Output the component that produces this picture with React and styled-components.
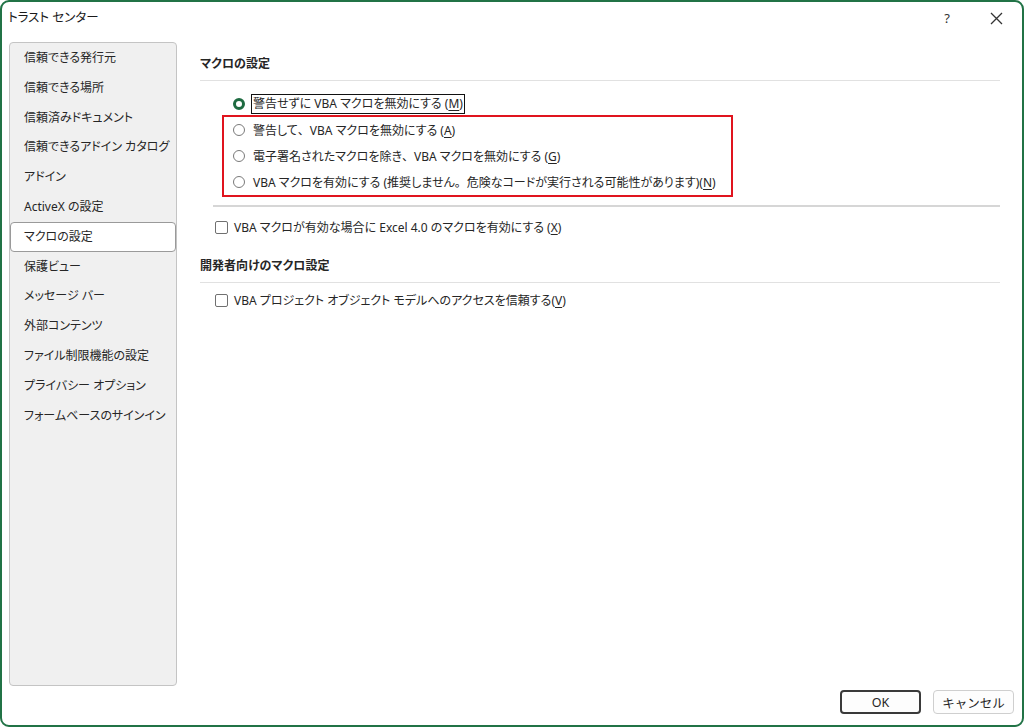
import styled, { createGlobalStyle } from "styled-components";

const GlobalStyle = createGlobalStyle`
  html, body {
    margin: 0;
    padding: 0;
    background: #ffffff;
  }
  body {
    font-family: "Noto Sans", "Noto Sans CJK JP", sans-serif;
    font-size: 13px;
    color: #262626;
    font-feature-settings: "palt";
  }
`;

const sideItems = [
  "信頼できる発行元",
  "信頼できる場所",
  "信頼済みドキュメント",
  "信頼できるアドイン カタログ",
  "アドイン",
  "ActiveX の設定",
  "マクロの設定",
  "保護ビュー",
  "メッセージ バー",
  "外部コンテンツ",
  "ファイル制限機能の設定",
  "プライバシー オプション",
  "フォームベースのサインイン",
];

const App = () => {
  return (
    <>
      <GlobalStyle />
      <Window>
        <TitleBar>
          <Title>トラスト センター</Title>
          <TitleButtons>
            <HelpButton>?</HelpButton>
            <CloseButton>
              <svg width="13" height="13" viewBox="0 0 13 13">
                <path d="M1 1 L12 12 M12 1 L1 12" stroke="#333" strokeWidth="1.3" fill="none" />
              </svg>
            </CloseButton>
          </TitleButtons>
        </TitleBar>

        <Body>
          <Sidebar>
            {sideItems.map((item) => (
              <SideItem key={item} $active={item === "マクロの設定"}>
                {item}
              </SideItem>
            ))}
          </Sidebar>

          <Content>
            <SectionHeading>マクロの設定</SectionHeading>
            <Rule />
            <RadioGroup>
              <RadioRow>
                <Radio $checked />
                <FocusLabel>
                  警告せずに VBA マクロを無効にする (<u>M</u>)
                </FocusLabel>
              </RadioRow>
              <Highlight>
                <RadioRow $tall>
                  <Radio />
                  <Label>
                    警告して<Punct>、</Punct>VBA マクロを無効にする (<u>A</u>)
                  </Label>
                </RadioRow>
                <RadioRow $tall>
                  <Radio />
                  <Label>
                    電子署名されたマクロを除き<Punct>、</Punct>VBA マクロを無効にする (<u>G</u>)
                  </Label>
                </RadioRow>
                <RadioRow $tall>
                  <Radio />
                  <Label>
                    VBA マクロを有効にする (推奨しません<Punct>。</Punct>危険なコードが実行される可能性があります)(<u>N</u>)
                  </Label>
                </RadioRow>
              </Highlight>
            </RadioGroup>
            <Divider />
            <CheckRow>
              <Checkbox />
              <Label>
                VBA マクロが有効な場合に Excel 4.0 のマクロを有効にする (<u>X</u>)
              </Label>
            </CheckRow>
            <SectionHeading $second>開発者向けのマクロ設定</SectionHeading>
            <Rule />
            <CheckRow $first>
              <Checkbox />
              <Label>
                VBA プロジェクト オブジェクト モデルへのアクセスを信頼する(<u>V</u>)
              </Label>
            </CheckRow>
          </Content>
        </Body>

        <Footer>
          <Button $primary>OK</Button>
          <Button>キャンセル</Button>
        </Footer>
      </Window>
    </>
  );
};

export default App;

const Window = styled.div`
  box-sizing: border-box;
  width: 1024px;
  height: 727px;
  border: 2px solid #217346;
  border-radius: 9px;
  background: #ffffff;
  display: flex;
  flex-direction: column;
  overflow: hidden;
`;

const TitleBar = styled.div`
  height: 40px;
  display: flex;
  align-items: flex-start;
  justify-content: space-between;
  padding: 6px 0 0 6px;
  box-sizing: border-box;
`;

const Title = styled.div`
  font-size: 12.5px;
  line-height: 20px;
  color: #1a1a1a;
`;

const TitleButtons = styled.div`
  display: flex;
  align-items: center;
  height: 20px;
`;

const HelpButton = styled.div`
  width: 46px;
  text-align: center;
  font-size: 13px;
  color: #333;
  margin-right: 3px;
`;

const CloseButton = styled.div`
  width: 46px;
  display: flex;
  justify-content: center;
  margin-right: 3px;
`;

const Body = styled.div`
  flex: 1;
  display: flex;
  padding-left: 7px;
  min-height: 0;
`;

const Sidebar = styled.div`
  box-sizing: border-box;
  width: 168px;
  height: 644px;
  background: #f0f0f0;
  border: 1px solid #c4c4c4;
  border-radius: 4px;
  display: flex;
  flex-direction: column;
`;

const SideItem = styled.div`
  box-sizing: border-box;
  height: 29.8px;
  padding-left: ${(p) => (p.$active ? "13px" : "14px")};
  font-size: 12px;
  color: #262626;
  white-space: nowrap;
  background: ${(p) => (p.$active ? "#ffffff" : "transparent")};
  border: ${(p) => (p.$active ? "1px solid #9a9a9a" : "none")};
  border-radius: 4px;
  line-height: ${(p) => (p.$active ? "27.8px" : "29.8px")};
`;

const Content = styled.div`
  flex: 1;
  padding: 12px 22px 0 23px;
`;

const SectionHeading = styled.div`
  font-weight: bold;
  font-size: 12px;
  line-height: 20px;
  margin-top: ${(p) => (p.$second ? "17px" : "0")};
`;

const Rule = styled.div`
  height: 1px;
  background: #e1e1e1;
  margin-top: 6px;
`;

const RadioGroup = styled.div`
  display: flex;
  flex-direction: column;
  padding-top: 11px;
  padding-left: 22px;
`;

const Highlight = styled.div`
  width: 511px;
  box-sizing: border-box;
  border: 2px solid #e0141e;
  padding-left: 9px;
  margin-top: -1px;
`;

const RadioRow = styled.div`
  display: flex;
  align-items: center;
  height: ${(p) => (p.$tall ? "26px" : "24px")};
  padding-left: ${(p) => (p.$tall ? "0" : "11px")};
`;

const Radio = styled.span`
  box-sizing: border-box;
  width: 12px;
  height: 12px;
  border-radius: 50%;
  border: ${(p) => (p.$checked ? "3px solid #1e6b41" : "1px solid #7a7a7a")};
  background: #fff;
  margin-right: 8px;
  flex-shrink: 0;
`;

const Label = styled.span`
  font-size: 12px;
  white-space: nowrap;
  color: #262626;

  u {
    text-decoration-thickness: 1px;
    text-underline-offset: 2px;
  }
`;

const Punct = styled.span`
  font-feature-settings: normal;
`;

const FocusLabel = styled(Label)`
  border: 1.5px solid #111;
  padding: 0 1px;
  line-height: 18px;
  margin-left: -2px;
`;

const Divider = styled.div`
  height: 2px;
  background: #d6d6d6;
  margin: 8px 0 0 13px;
`;

const CheckRow = styled.div`
  display: flex;
  align-items: center;
  height: 24px;
  margin-top: ${(p) => (p.$first ? "5px" : "8px")};
  padding-left: 15px;
`;

const Checkbox = styled.span`
  box-sizing: border-box;
  width: 13px;
  height: 13px;
  border: 1px solid #707070;
  border-radius: 2px;
  background: #fff;
  margin-right: 6px;
  flex-shrink: 0;
`;

const Footer = styled.div`
  height: 41px;
  box-sizing: border-box;
  display: flex;
  justify-content: flex-end;
  align-items: flex-start;
  gap: 12px;
  padding: 6px 8px 0 0;
`;

const Button = styled.button`
  box-sizing: border-box;
  width: 81px;
  height: 24px;
  border-radius: 4px;
  background: #fdfdfd;
  border: ${(p) => (p.$primary ? "2px solid #3a3a3a" : "1px solid #cfcfcf")};
  font-family: "Noto Sans", "Noto Sans CJK JP", sans-serif;
  font-size: 12.5px;
  color: #262626;
  padding: 0;
  cursor: pointer;
`;
